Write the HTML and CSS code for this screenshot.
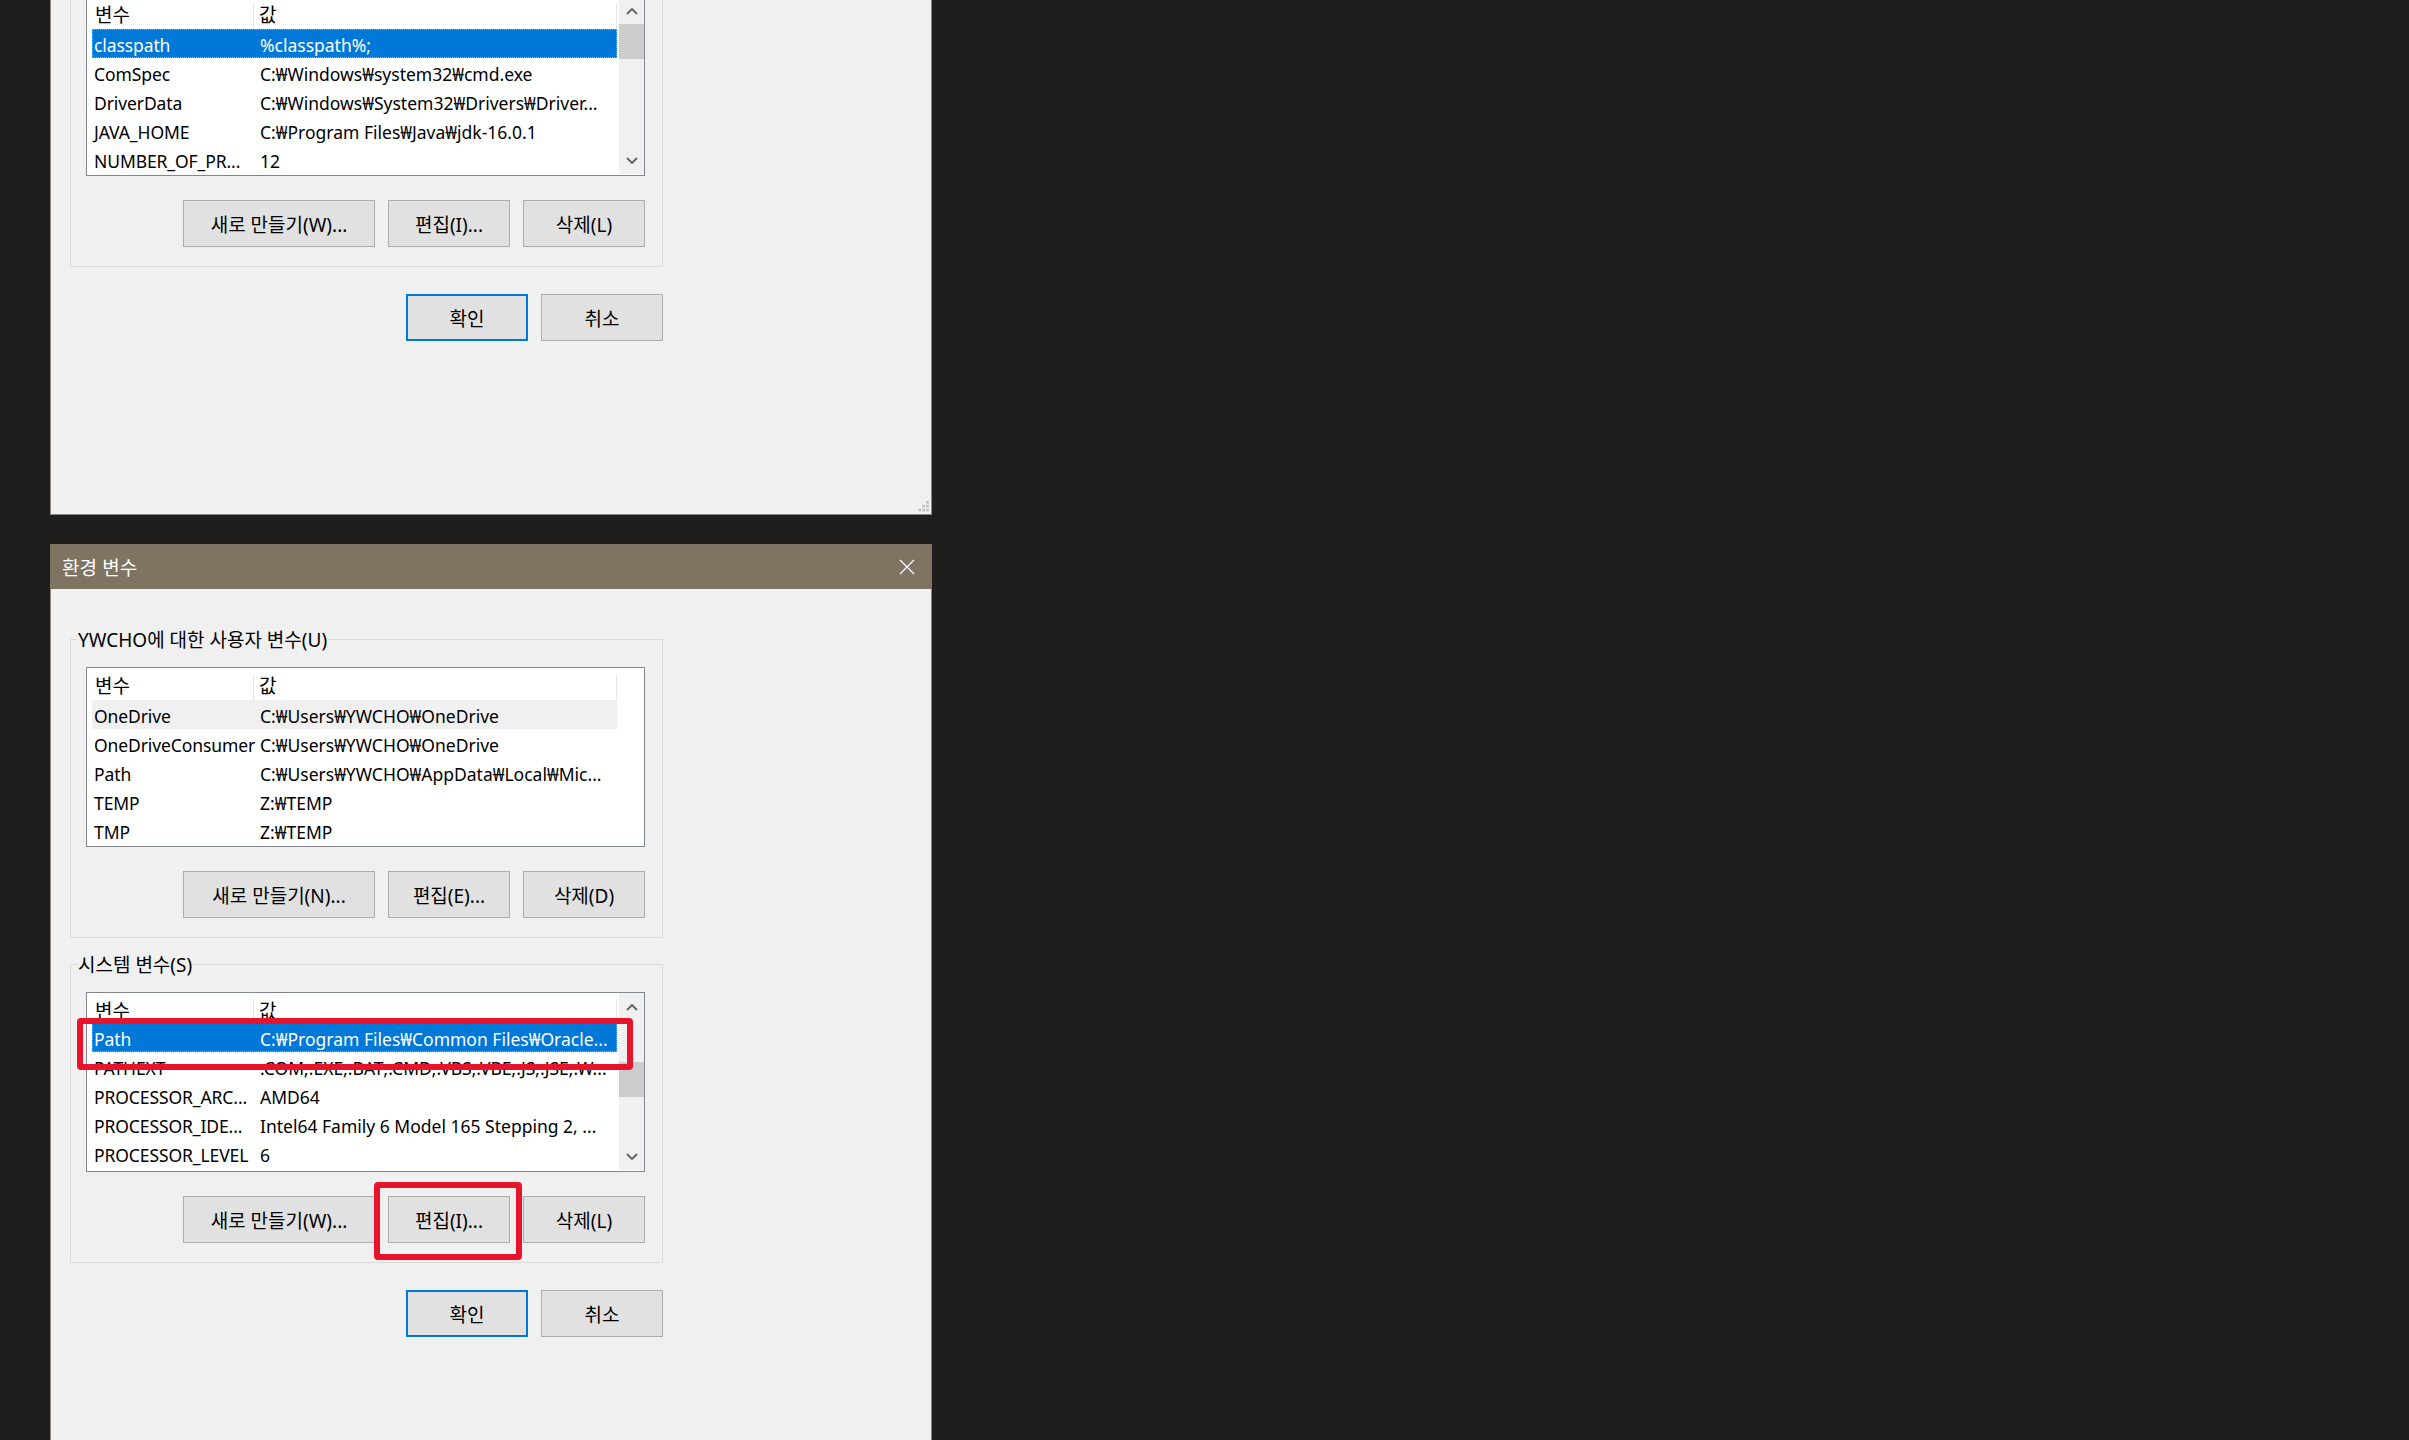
FILE: index.html
```html
<!DOCTYPE html>
<html lang="ko">
<head>
  <meta charset="UTF-8">
  <title>환경 변수</title>
  <link rel="stylesheet" href="styles.css">
</head>
<body>

  <div class="desktop">

    <!-- Earlier state of the dialog: classpath selected -->
    <section class="window window-back">
      <div class="titlebar">
        <span class="title">환경 변수</span>
        <svg class="close" width="16" height="16" viewBox="0 0 16 16"><path d="M1 1 L15 15 M15 1 L1 15" stroke="#fff" stroke-width="1.2" fill="none"/></svg>
      </div>
      <div class="window-body">
        <div class="group">
          <span class="group-title">YWCHO에 대한 사용자 변수(U)</span>
          <div class="list">
            <div class="list-main">
              <div class="list-head list-head-tall"><span class="cell-name">변수</span><span class="cell-value">값</span></div>
              <div class="list-row"><span class="cell-name">OneDrive</span><span class="cell-value">C:₩Users₩YWCHO₩OneDrive</span></div>
              <div class="list-row"><span class="cell-name">OneDriveConsumer</span><span class="cell-value">C:₩Users₩YWCHO₩OneDrive</span></div>
              <div class="list-row"><span class="cell-name">Path</span><span class="cell-value">C:₩Users₩YWCHO₩AppData₩Local₩Mic...</span></div>
              <div class="list-row"><span class="cell-name">TEMP</span><span class="cell-value">Z:₩TEMP</span></div>
              <div class="list-row"><span class="cell-name">TMP</span><span class="cell-value">Z:₩TEMP</span></div>
            </div>
          </div>
          <div class="button-row">
            <button class="btn btn-wide">새로 만들기(N)...</button>
            <button class="btn">편집(E)...</button>
            <button class="btn">삭제(D)</button>
          </div>
        </div>

        <div class="group">
          <span class="group-title">시스템 변수(S)</span>
          <div class="list">
            <div class="list-main">
              <div class="list-head list-head-tall"><span class="cell-name">변수</span><span class="cell-value">값</span></div>
              <div class="list-row selected"><span class="cell-name">classpath</span><span class="cell-value">%classpath%;</span></div>
              <div class="list-row"><span class="cell-name">ComSpec</span><span class="cell-value">C:₩Windows₩system32₩cmd.exe</span></div>
              <div class="list-row"><span class="cell-name">DriverData</span><span class="cell-value">C:₩Windows₩System32₩Drivers₩Driver...</span></div>
              <div class="list-row"><span class="cell-name">JAVA_HOME</span><span class="cell-value">C:₩Program Files₩Java₩jdk-16.0.1</span></div>
              <div class="list-row"><span class="cell-name">NUMBER_OF_PR...</span><span class="cell-value">12</span></div>
            </div>
            <div class="scrollbar">
              <div class="arrow"><svg width="12" height="8" viewBox="0 0 12 8"><polyline points="1,7 6,2 11,7" fill="none" stroke="#606060" stroke-width="1.8"/></svg></div>
              <div class="track"><div class="thumb"></div></div>
              <div class="arrow"><svg width="12" height="8" viewBox="0 0 12 8"><polyline points="1,1 6,6 11,1" fill="none" stroke="#606060" stroke-width="1.8"/></svg></div>
            </div>
          </div>
          <div class="button-row">
            <button class="btn btn-wide">새로 만들기(W)...</button>
            <button class="btn">편집(I)...</button>
            <button class="btn">삭제(L)</button>
          </div>
        </div>

        <div class="dialog-buttons">
          <button class="btn btn-default">확인</button>
          <button class="btn">취소</button>
        </div>
      </div>
      <svg class="grip" width="11" height="11" viewBox="0 0 11 11">
        <rect x="8.2" y="0" width="2.6" height="2.6"/>
        <rect x="4.4" y="3.9" width="2.6" height="2.6"/>
        <rect x="8.2" y="3.9" width="2.6" height="2.6"/>
        <rect x="0.6" y="7.8" width="2.6" height="2.6"/>
        <rect x="4.4" y="7.8" width="2.6" height="2.6"/>
        <rect x="8.2" y="7.8" width="2.6" height="2.6"/>
      </svg>
    </section>

    <!-- Current state: Path selected, 편집 highlighted -->
    <section class="window">
      <div class="titlebar">
        <span class="title">환경 변수</span>
        <svg class="close" width="16" height="16" viewBox="0 0 16 16"><path d="M1 1 L15 15 M15 1 L1 15" stroke="#fff" stroke-width="1.2" fill="none"/></svg>
      </div>
      <div class="window-body">
        <div class="group">
          <span class="group-title">YWCHO에 대한 사용자 변수(U)</span>
          <div class="list">
            <div class="list-main">
              <div class="list-head list-head-tall"><span class="cell-name">변수</span><span class="cell-value">값</span></div>
              <div class="list-row hover"><span class="cell-name">OneDrive</span><span class="cell-value">C:₩Users₩YWCHO₩OneDrive</span></div>
              <div class="list-row"><span class="cell-name">OneDriveConsumer</span><span class="cell-value">C:₩Users₩YWCHO₩OneDrive</span></div>
              <div class="list-row"><span class="cell-name">Path</span><span class="cell-value">C:₩Users₩YWCHO₩AppData₩Local₩Mic...</span></div>
              <div class="list-row"><span class="cell-name">TEMP</span><span class="cell-value">Z:₩TEMP</span></div>
              <div class="list-row"><span class="cell-name">TMP</span><span class="cell-value">Z:₩TEMP</span></div>
            </div>
          </div>
          <div class="button-row">
            <button class="btn btn-wide">새로 만들기(N)...</button>
            <button class="btn">편집(E)...</button>
            <button class="btn">삭제(D)</button>
          </div>
        </div>

        <div class="group">
          <span class="group-title">시스템 변수(S)</span>
          <div class="list">
            <div class="list-main">
              <div class="list-head"><span class="cell-name">변수</span><span class="cell-value">값</span></div>
              <div class="list-row selected"><span class="cell-name">Path</span><span class="cell-value">C:₩Program Files₩Common Files₩Oracle...</span></div>
              <div class="list-row"><span class="cell-name">PATHEXT</span><span class="cell-value">.COM;.EXE;.BAT;.CMD;.VBS;.VBE;.JS;.JSE;.W...</span></div>
              <div class="list-row"><span class="cell-name">PROCESSOR_ARC...</span><span class="cell-value">AMD64</span></div>
              <div class="list-row"><span class="cell-name">PROCESSOR_IDE...</span><span class="cell-value">Intel64 Family 6 Model 165 Stepping 2, ...</span></div>
              <div class="list-row"><span class="cell-name">PROCESSOR_LEVEL</span><span class="cell-value">6</span></div>
            </div>
            <div class="scrollbar">
              <div class="arrow"><svg width="12" height="8" viewBox="0 0 12 8"><polyline points="1,7 6,2 11,7" fill="none" stroke="#606060" stroke-width="1.8"/></svg></div>
              <div class="track"><div class="thumb thumb-mid"></div></div>
              <div class="arrow"><svg width="12" height="8" viewBox="0 0 12 8"><polyline points="1,1 6,6 11,1" fill="none" stroke="#606060" stroke-width="1.8"/></svg></div>
            </div>
          </div>
          <div class="button-row">
            <button class="btn btn-wide">새로 만들기(W)...</button>
            <button class="btn">편집(I)...</button>
            <button class="btn">삭제(L)</button>
          </div>
        </div>

        <div class="dialog-buttons">
          <button class="btn btn-default">확인</button>
          <button class="btn">취소</button>
        </div>
      </div>

      <!-- annotation boxes -->
      <div class="mark mark-row"></div>
      <div class="mark mark-edit"></div>
    </section>

  </div>

</body>
</html>
```

FILE: styles.css
```css
/* General */
body {
  margin: 0;
  height: 1440px;
  overflow: hidden;
  background-color: #1f1e1d;
  font-family: "Noto Sans", "Noto Sans CJK KR", sans-serif;
  font-size: 18px;
  color: #000;
}

.desktop {
  display: flex;
  flex-direction: column;
  gap: 29px;
  padding-left: 50px;
}

/* Dialog window */
.window {
  position: relative;
  width: 882px;
  height: 967px;
  box-sizing: border-box;
  background: #f0f0f0;
  border: 1px solid #8a8782;
  border-top: none;
  flex: none;
}

.window-back {
  margin-top: -452px;
}

.titlebar {
  height: 45px;
  margin: 0 -1px;
  background: #7f7461;
  color: #fff;
  display: flex;
  align-items: center;
  justify-content: space-between;
  padding: 0 17px 0 12px;
}

.title {
  font-family: "Noto Sans CJK KR", sans-serif;
  font-size: 19px;
}

.window-body {
  padding: 50px 0 0 19px;
}

/* Group box */
.group {
  position: relative;
  width: 593px;
  box-sizing: border-box;
  border: 1px solid #dcdcdc;
  padding: 27px 17px 19px 15px;
}

.group + .group {
  margin-top: 26px;
}

.group-title {
  position: absolute;
  top: -12px;
  left: 6px;
  padding: 0 1px;
  font-size: 19px;
  line-height: 24px;
  background: #f0f0f0;
}

/* List view */
.list {
  height: 180px;
  box-sizing: border-box;
  border: 1px solid #828790;
  background: #fff;
  display: flex;
}

.list-main {
  width: 530px;
  flex: none;
  box-sizing: border-box;
  padding-left: 5px;
}

.list-head {
  height: 30px;
  display: flex;
  box-sizing: border-box;
  padding-top: 6px;
  font-size: 19px;
  line-height: 24px;
}

.list-head-tall {
  height: 32px;
}

.list-head .cell-name {
  border-right: 1px solid #e5e5e5;
  padding-left: 3px;
}

.list-head .cell-value {
  border-right: 1px solid #e5e5e5;
  padding-left: 5px;
}

.cell-name {
  width: 162px;
  flex: none;
  box-sizing: border-box;
  padding-left: 2px;
  white-space: nowrap;
}

.cell-value {
  flex: 1;
  padding-left: 6px;
  white-space: nowrap;
  overflow: hidden;
}

.list-row {
  height: 29px;
  display: flex;
  box-sizing: border-box;
  padding-top: 3px;
  font-size: 17.5px;
  line-height: 26px;
}

.list-row .cell-name {
  letter-spacing: -0.1px;
}

.list-row.hover {
  background: #f0f0f0;
}

.list-row.selected {
  background: #0078d7;
  color: #fff;
  outline: 1px dotted #e8a040;
  outline-offset: -1px;
}

/* Scrollbar */
.scrollbar {
  width: 25px;
  margin: 0 0 1px auto;
  background: #f0f0f0;
  display: flex;
  flex-direction: column;
}

.arrow {
  height: 27px;
  display: flex;
  align-items: center;
  justify-content: center;
}

.track {
  flex: 1;
}

.thumb {
  height: 35px;
  background: #cdcdcd;
}

.thumb-mid {
  margin-top: 42px;
}

/* Buttons */
.button-row,
.dialog-buttons {
  display: flex;
  justify-content: flex-end;
  gap: 13px;
}

.button-row {
  margin-top: 24px;
}

.dialog-buttons {
  width: 593px;
  margin-top: 27px;
}

.btn {
  width: 122px;
  height: 47px;
  box-sizing: border-box;
  background: #e1e1e1;
  border: 1px solid #adadad;
  font-family: "Noto Sans", "Noto Sans CJK KR", sans-serif;
  font-size: 19px;
  color: #000;
  padding: 0;
}

.btn-wide {
  width: 192px;
}

.btn-default {
  border: 2px solid #0078d7;
}

/* Resize grip */
.grip {
  position: absolute;
  right: 2px;
  bottom: 2px;
  fill: #bdbdbd;
}

/* Red annotation boxes */
.mark {
  position: absolute;
  box-sizing: border-box;
  border: 6px solid #e8142c;
  border-radius: 4px;
}

.mark-row {
  left: 26px;
  top: 474px;
  width: 556px;
  height: 52px;
}

.mark-edit {
  left: 323px;
  top: 638px;
  width: 148px;
  height: 78px;
}
```
